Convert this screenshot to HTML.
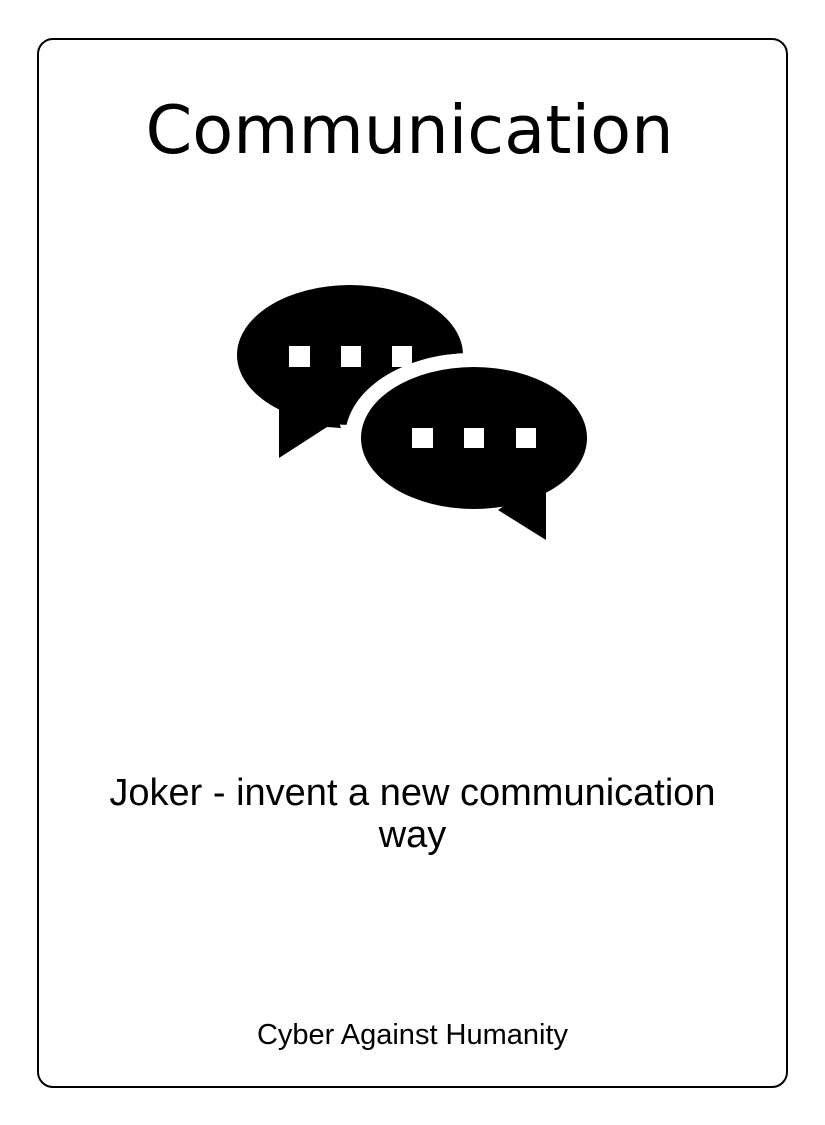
<!DOCTYPE html>
<html><head><style>
html,body{margin:0;padding:0;background:#fff;}
body{width:825px;height:1125px;position:relative;overflow:hidden;}
.card{position:absolute;left:37px;top:38px;width:751px;height:1050px;border:2px solid #000;border-radius:16px;box-sizing:border-box;}
.t{position:absolute;left:0;width:825px;text-align:center;color:#000;}
</style></head><body>
<div class="card"></div>
<div class="t" style="top:91px;left:-3px;font:67px 'DejaVu Sans',sans-serif;">Communication</div>
<svg style="position:absolute;left:0;top:0" width="825" height="1125">
<ellipse cx="350" cy="355" rx="113" ry="70"/>
<polygon points="279,400 279,458 327,427 341,428 330,395"/>
<rect x="289" y="346" width="21" height="21" fill="#fff"/>
<rect x="341" y="346" width="20" height="21" fill="#fff"/>
<rect x="392" y="346" width="20" height="21" fill="#fff"/>
<ellipse cx="472" cy="438" rx="127" ry="85" fill="#fff"/>
<ellipse cx="474" cy="438" rx="113" ry="71"/>
<polygon points="546,480 546,540 498,510 520,495"/>
<rect x="412" y="428" width="21" height="20" fill="#fff"/>
<rect x="464" y="428" width="20" height="20" fill="#fff"/>
<rect x="516" y="428" width="20" height="20" fill="#fff"/>
</svg>
<div class="t" style="top:772px;font:38px/42px 'Liberation Sans',sans-serif;">Joker - invent a new communication<br>way</div>
<div class="t" style="top:1019px;font:29px 'Liberation Sans',sans-serif;">Cyber Against Humanity</div>
</body></html>
